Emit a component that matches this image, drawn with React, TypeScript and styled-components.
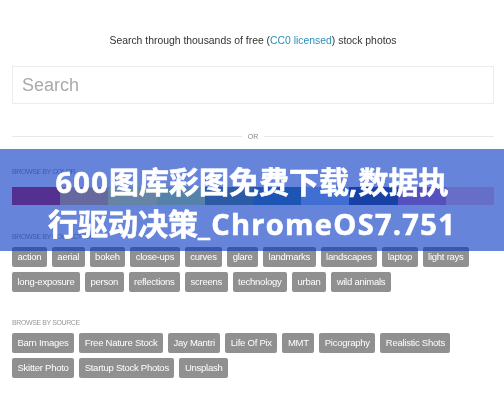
import * as React from "react";
import styled, {createGlobalStyle} from "styled-components";

const GlobalStyle = createGlobalStyle`
  html, body {
    margin: 0;
    padding: 0;
    background: #fff;
    overflow: hidden;
  }
`

const Page = styled.div`
  position: relative;
  width: 504px;
  height: 400px;
  box-sizing: border-box;
  padding: 34px 10px 0 12px;
  font-family: "Liberation Sans", Arial, sans-serif;
  overflow: hidden;
  filter: blur(0.3px);
`

const Tagline = styled.p`
  margin: 0;
  height: 14px;
  font-size: 10.4px;
  line-height: 14px;
  color: #333;
  text-align: center;
`

const LicenseLink = styled.span`
  color: #2a8fb5;
`

const SearchInput = styled.input`
  display: block;
  width: 100%;
  height: 38px;
  margin-top: 18px;
  padding: 0 9px;
  box-sizing: border-box;
  border: 1px solid #ececec;
  background: #fff;
  font-family: inherit;
  font-size: 18px;
  outline: none;

  &::placeholder {
    color: #aaa;
    opacity: 1;
  }
`

const Divider = styled.div`
  display: flex;
  align-items: center;
  gap: 6px;
  margin-top: 26px;
  height: 12px;
  font-size: 7px;
  color: #888;

  &::before, &::after {
    content: "";
    flex: 1;
    height: 1px;
    background: #e8e8e8;
  }
`

const Section = styled.section<{$top: number}>`
  margin-top: ${p => p.$top}px;
`

const SectionLabel = styled.h3`
  margin: 0 0 5px;
  height: 10px;
  font-size: 7px;
  line-height: 10px;
  font-weight: 400;
  letter-spacing: -0.4px;
  color: #999;
  text-transform: uppercase;
`

const Swatches = styled.div`
  display: flex;
  height: 18px;
  margin-top: 10px;
`

const Swatch = styled.div<{$color: string}>`
  flex: 1;
  background: ${p => p.$color};
`

const Tags = styled.div`
  display: flex;
  flex-wrap: wrap;
  gap: 5px;
`

const Tag = styled.a`
  display: block;
  height: 20px;
  padding: 0 5.5px;
  border-radius: 2px;
  background: #909090;
  color: #fff;
  font-size: 9.5px;
  letter-spacing: -0.25px;
  line-height: 20px;
`

const Banner = styled.div`
  position: absolute;
  left: 0;
  right: 0;
  top: 149px;
  height: 102px;
  box-sizing: border-box;
  padding-top: 11px;
  background: rgba(0, 50, 193, 0.6);
  color: #fff;
  font-family: "Open Sans", "Noto Sans CJK SC", sans-serif;
  font-size: 29px;
  font-weight: 700;
  letter-spacing: 1.3px;
  line-height: 40px;
  text-align: center;
  -webkit-text-stroke: 0.6px #fff;
`

const Han = styled.span`
  font-family: "Noto Sans CJK SC", sans-serif;
  letter-spacing: 0;
  font-size: 30px;
`

const colors = ["#d22d46", "#ffbb6e", "#ffff7a", "#d4fa87", "#70967a", "#4689a0", "#a2c8eb", "#3e577a", "#d47db9", "#ffc8d2"];
const collections = ["action", "aerial", "bokeh", "close-ups", "curves", "glare", "landmarks", "landscapes", "laptop", "light rays", "long-exposure", "person", "reflections", "screens", "technology", "urban", "wild animals"];
const sources = ["Barn Images", "Free Nature Stock", "Jay Mantri", "Life Of Pix", "MMT", "Picography", "Realistic Shots", "Skitter Photo", "Startup Stock Photos", "Unsplash"];

const App = () => (
    <Page>
        <GlobalStyle/>
        <Tagline>Search through thousands of free (<LicenseLink>CC0 licensed</LicenseLink>) stock photos</Tagline>
        <SearchInput placeholder="Search"/>
        <Divider>OR</Divider>
        <Section $top={25}>
            <SectionLabel>Browse by color</SectionLabel>
            <Swatches>
                {colors.map(c => <Swatch key={c} $color={c}/>)}
            </Swatches>
        </Section>
        <Section $top={27}>
            <SectionLabel>Browse by collection</SectionLabel>
            <Tags>
                {collections.map(t => <Tag key={t}>{t}</Tag>)}
            </Tags>
        </Section>
        <Section $top={26}>
            <SectionLabel>Browse by source</SectionLabel>
            <Tags>
                {sources.map(t => <Tag key={t}>{t}</Tag>)}
            </Tags>
        </Section>
        <Banner>600<Han>图库彩图免费下载</Han>,<Han>数据执</Han><br/><Han>行驱动决策</Han>_ChromeOS7.751</Banner>
    </Page>
);

export default App;
